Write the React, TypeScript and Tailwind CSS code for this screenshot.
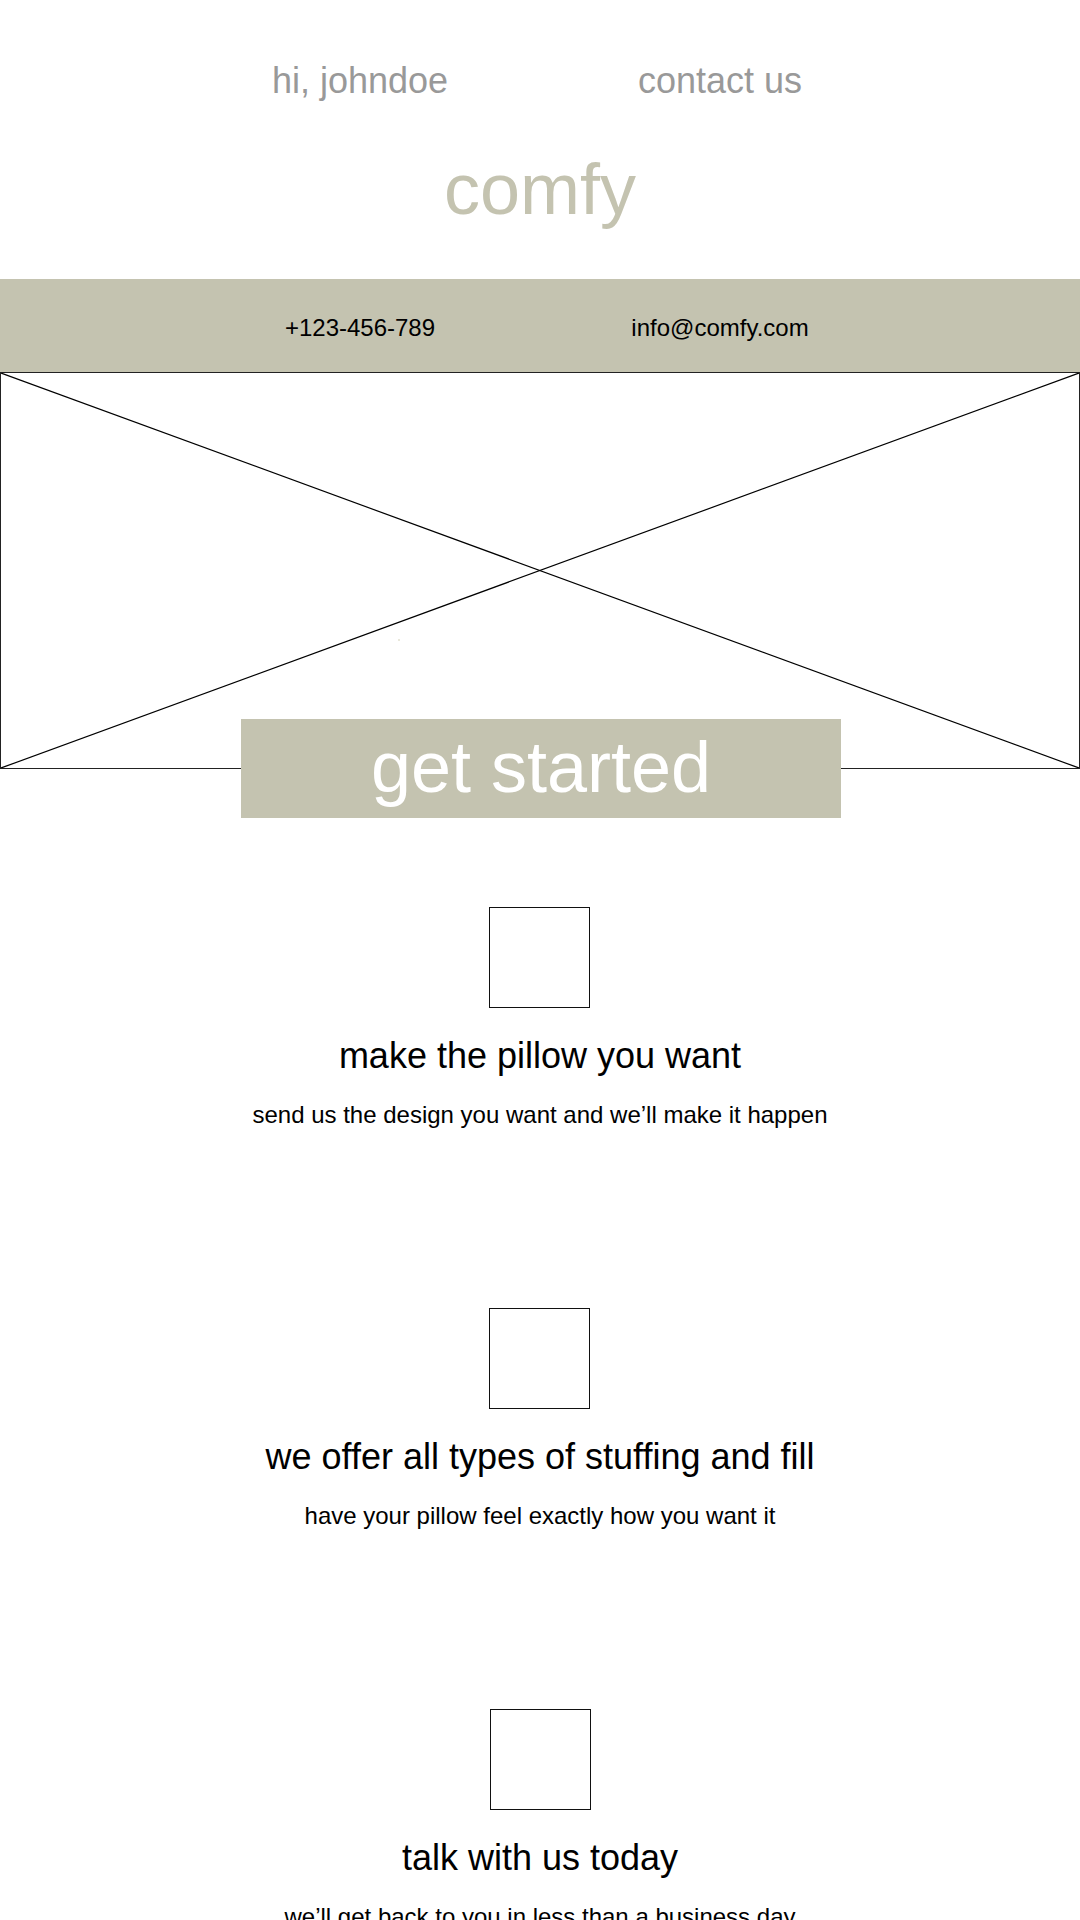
import React from "react";

const features = [
  {
    title: "make the pillow you want",
    text: "send us the design you want and we\u2019ll make it happen",
  },
  {
    title: "we offer all types of stuffing and fill",
    text: "have your pillow feel exactly how you want it",
  },
  {
    title: "talk with us today",
    text: "we\u2019ll get back to you in less than a business day",
  },
];

const App: React.FC = () => {
  return (
    <div
      className="min-h-[1920px] bg-white overflow-hidden"
      style={{ fontFamily: '"Liberation Sans", Arial, sans-serif' }}
    >
      {/* top links */}
      <div className="w-[720px] mx-auto grid grid-cols-2 text-center pt-[61px] text-[36px] leading-[40px] text-[#999999]">
        <span>hi, johndoe</span>
        <span>contact us</span>
      </div>

      {/* logo */}
      <div className="mt-[48px] text-center text-[72px] leading-[80px] text-[#c4c3b0]">
        comfy
      </div>

      {/* contact band */}
      <div className="mt-[50px] h-[93px] bg-[#c4c3b0] flex items-center">
        <div className="w-[720px] mx-auto grid grid-cols-2 text-center text-[24px] leading-[28px] text-black pt-[5px]">
          <span>+123-456-789</span>
          <span>info@comfy.com</span>
        </div>
      </div>

      {/* hero image placeholder */}
      <div className="relative h-[397px] border border-[#222222]">
        <svg
          className="absolute inset-0 w-full h-full"
          viewBox="0 0 100 100"
          preserveAspectRatio="none"
        >
          <line x1="0" y1="0" x2="100" y2="100" stroke="#000" strokeWidth="1.2" vectorEffect="non-scaling-stroke" />
          <line x1="100" y1="0" x2="0" y2="100" stroke="#000" strokeWidth="1.2" vectorEffect="non-scaling-stroke" />
        </svg>
        <span className="absolute left-[397px] top-[266px] w-[2px] h-[2px] rounded-full bg-[#e2e0cf]" />
      </div>

      {/* call to action */}
      <div className="flex justify-center -mt-[50px] relative pl-[2px]">
        <button className="w-[600px] h-[99px] bg-[#c4c3b0] text-white text-[72px] leading-[96px] pb-[4px]">
          get started
        </button>
      </div>

      {/* features */}
      <div className="flex flex-col items-center mt-[89px] gap-[179px]">
        {features.map((f) => (
          <div key={f.title} className="flex flex-col items-center text-black">
            <div className="w-[101px] h-[101px] border border-[#111111]" />
            <h2 className="mt-[28px] text-[36px] leading-[40px]">{f.title}</h2>
            <p className="mt-[25px] text-[24px] leading-[28px]">{f.text}</p>
          </div>
        ))}
      </div>
    </div>
  );
};

export default App;
